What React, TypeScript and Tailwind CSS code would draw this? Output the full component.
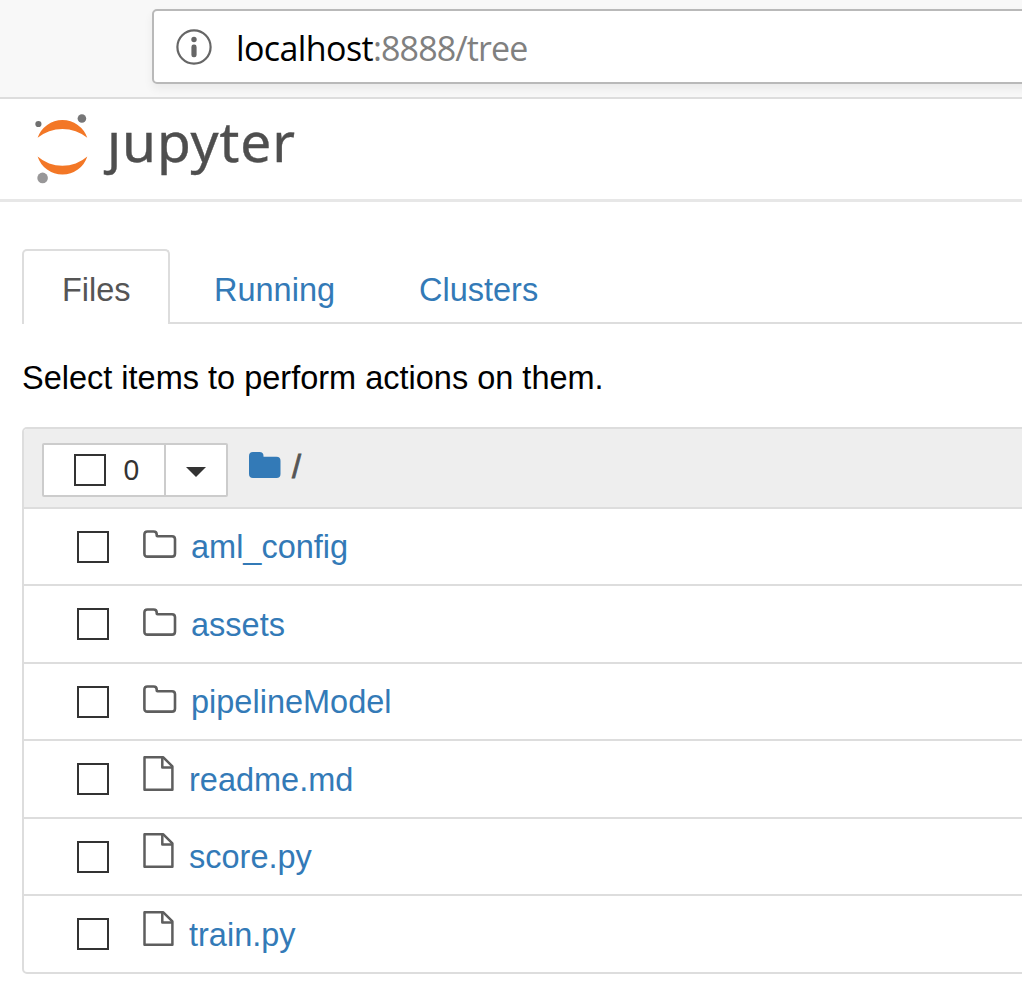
import React from "react";

type Entry = { name: string; kind: "folder" | "file" };

const entries: Entry[] = [
  { name: "aml_config", kind: "folder" },
  { name: "assets", kind: "folder" },
  { name: "pipelineModel", kind: "folder" },
  { name: "readme.md", kind: "file" },
  { name: "score.py", kind: "file" },
  { name: "train.py", kind: "file" },
];

function InfoIcon() {
  return (
    <svg className="h-[36px] w-[36px] shrink-0" viewBox="0 0 36 36" fill="none">
      <circle cx="18" cy="18" r="16.6" stroke="#666" strokeWidth="2.2" />
      <circle cx="18" cy="10.5" r="2.7" fill="#666" />
      <rect x="15.4" y="15.6" width="5.2" height="12.6" rx="2.3" fill="#666" />
    </svg>
  );
}

function JupyterMark() {
  return (
    <svg className="h-[72px] w-[54px] shrink-0" viewBox="0 0 54 72">
      <path d="M2.6 24.8A26.3 26.3 0 0 1 52.3 24.8A39.3 39.3 0 0 0 2.6 24.8Z" fill="#f37726" />
      <path d="M2.6 43.5A26.1 26.1 0 0 0 52.3 43.5A37.7 37.7 0 0 1 2.6 43.5Z" fill="#f37726" />
      <circle cx="3.4" cy="11" r="3.1" fill="#6f6f6f" />
      <circle cx="46.9" cy="5.5" r="4.3" fill="#767677" />
      <circle cx="7.6" cy="64.9" r="5.3" fill="#989798" />
    </svg>
  );
}

function FolderIcon() {
  return (
    <svg className="h-[28px] w-[34px]" viewBox="0 0 34 28" fill="none">
      <path
        d="M4.4 1.5H10.6Q13.7 1.5 13.7 4.6V5.5Q13.7 6.2 14.5 6.2H29Q32 6.2 32 9.2V23.4Q32 26.6 29 26.6H4.4Q1.4 26.6 1.4 23.4V4.6Q1.4 1.5 4.4 1.5Z"
        stroke="#5e5e5e"
        strokeWidth="2.6"
      />
    </svg>
  );
}

function FileIcon() {
  return (
    <svg className="h-[36px] w-[31px]" viewBox="0 0 31 36" fill="none" stroke="#5e5e5e" strokeWidth="2.5" strokeLinejoin="round">
      <path d="M1.5 1.3H20.3L29.4 10.4V33.8H1.5Z" />
      <path d="M19.3 1.3V11.4H29.4" />
    </svg>
  );
}

function Checkbox() {
  return <span className="block h-8 w-8 shrink-0 border-2 border-[#333] bg-white" />;
}

function Row({ entry, index }: { entry: Entry; index: number }) {
  const odd = index % 2 === 1;
  const last = index === entries.length - 1;
  const folder = entry.kind === "folder";
  return (
    <div
      className={`flex items-start pl-[53px] ${odd ? "h-[78px]" : "h-[77px]"} ${last ? "" : "border-b-2 border-[#ddd]"}`}
    >
      <div className="mt-[22px]">
        <Checkbox />
      </div>
      <div className={`flex items-start ${odd ? "pt-px" : ""}`}>
        <div className={folder ? "ml-[34px] mt-[21px] w-[48px]" : "ml-[34px] mt-[14px] w-[46px]"}>
          {folder ? <FolderIcon /> : <FileIcon />}
        </div>
        <a className="mt-[18px] text-[32.5px] leading-[40px] text-[#337ab7]">{entry.name}</a>
      </div>
    </div>
  );
}

export default function App() {
  return (
    <div className="h-[1001px] w-[1022px] overflow-hidden bg-white font-['Liberation_Sans',Arial,sans-serif]">
      <div className="h-[99px] overflow-hidden border-b-2 border-[#ddd] bg-[#f8f8f8] pl-[152px] pt-[9px]">
        <div className="flex h-[75px] w-[900px] items-center rounded-[5px] border-2 border-[#b9b9b9] bg-white pl-[22px] shadow-[0_5px_10px_rgba(0,0,0,0.06)]">
          <InfoIcon />
          <div className="ml-[24px] mt-[3px] whitespace-nowrap font-['Open_Sans','Noto_Sans',sans-serif] text-[34px] leading-[46px] tracking-[-0.9px] text-[#808080]">
            <span className="tracking-[-0.6px] text-black">localhost</span>:8888/tree
          </div>
        </div>
      </div>

      <header className="flex h-[103px] items-start overflow-hidden border-b-[3px] border-[#e7e7e7] pl-[35px] pt-[14px]">
        <JupyterMark />
        <div className="-mt-[7px] ml-[18px] whitespace-nowrap font-['Noto_Sans','Open_Sans',sans-serif] text-[55px] leading-[70px] tracking-[0.9px] text-[#4e4e4e] [-webkit-text-stroke:0.4px_#4e4e4e]">
          <span className="inline-block [clip-path:inset(24px_-20px_-20px_-20px)]">j</span>upyter
        </div>
      </header>

      <nav className="mt-[47px] flex h-[75px] pl-[22px] text-[32.5px] leading-[40px] text-[#337ab7]">
        <div className="h-[75px] w-[148px] rounded-t-[5px] border-2 border-b-0 border-[#ddd] pl-[38px] pt-[19px] text-[#555]">Files</div>
        <div className="flex flex-1 border-b-2 border-[#ddd] pt-[21px]">
          <a className="w-[205px] pl-[44px]">Running</a>
          <a className="pl-[44px]">Clusters</a>
        </div>
      </nav>

      <p className="mt-[34px] h-[40px] pl-[22px] text-[32.5px] leading-[40px] text-black">Select items to perform actions on them.</p>

      <section className="ml-[22px] mt-[29px] h-[547px] w-[1020px] overflow-hidden rounded-[5px] border-2 border-[#ddd]">
        <div className="flex h-[80px] items-start border-b-2 border-[#ddd] bg-[#eee] pl-[18px] pt-[14px]">
          <div className="flex h-[54px] w-[186px] rounded-[2px] border-2 border-[#ccc] bg-white">
            <div className="flex w-[122px] items-center border-r-2 border-[#ccc] pl-[30px] text-[30px] leading-[34px] text-[#333]">
              <Checkbox />
              <span className="ml-[17px] origin-center scale-x-[0.94]">0</span>
            </div>
            <div className="flex flex-1 justify-center pt-[22px]">
              <svg className="h-[10px] w-[20px]" viewBox="0 0 20 10">
                <path d="M0 0H20L10 10Z" fill="#333" />
              </svg>
            </div>
          </div>
          <svg className="ml-[21px] mt-[9px] h-[26px] w-[32px]" viewBox="0 0 32 26">
            <path d="M4 0H10.5Q14.5 0 14.5 4V4.7H27.5Q31.5 4.7 31.5 8.7V22Q31.5 26 27.5 26H4Q0 26 0 22V4Q0 0 4 0Z" fill="#337ab7" />
          </svg>
          <span className="ml-[11px] mt-[4px] text-[32.5px] leading-[40px] text-[#555] [-webkit-text-stroke:0.8px_#555]">/</span>
        </div>
        {entries.map((entry, i) => (
          <Row key={entry.name} entry={entry} index={i} />
        ))}
      </section>
    </div>
  );
}
